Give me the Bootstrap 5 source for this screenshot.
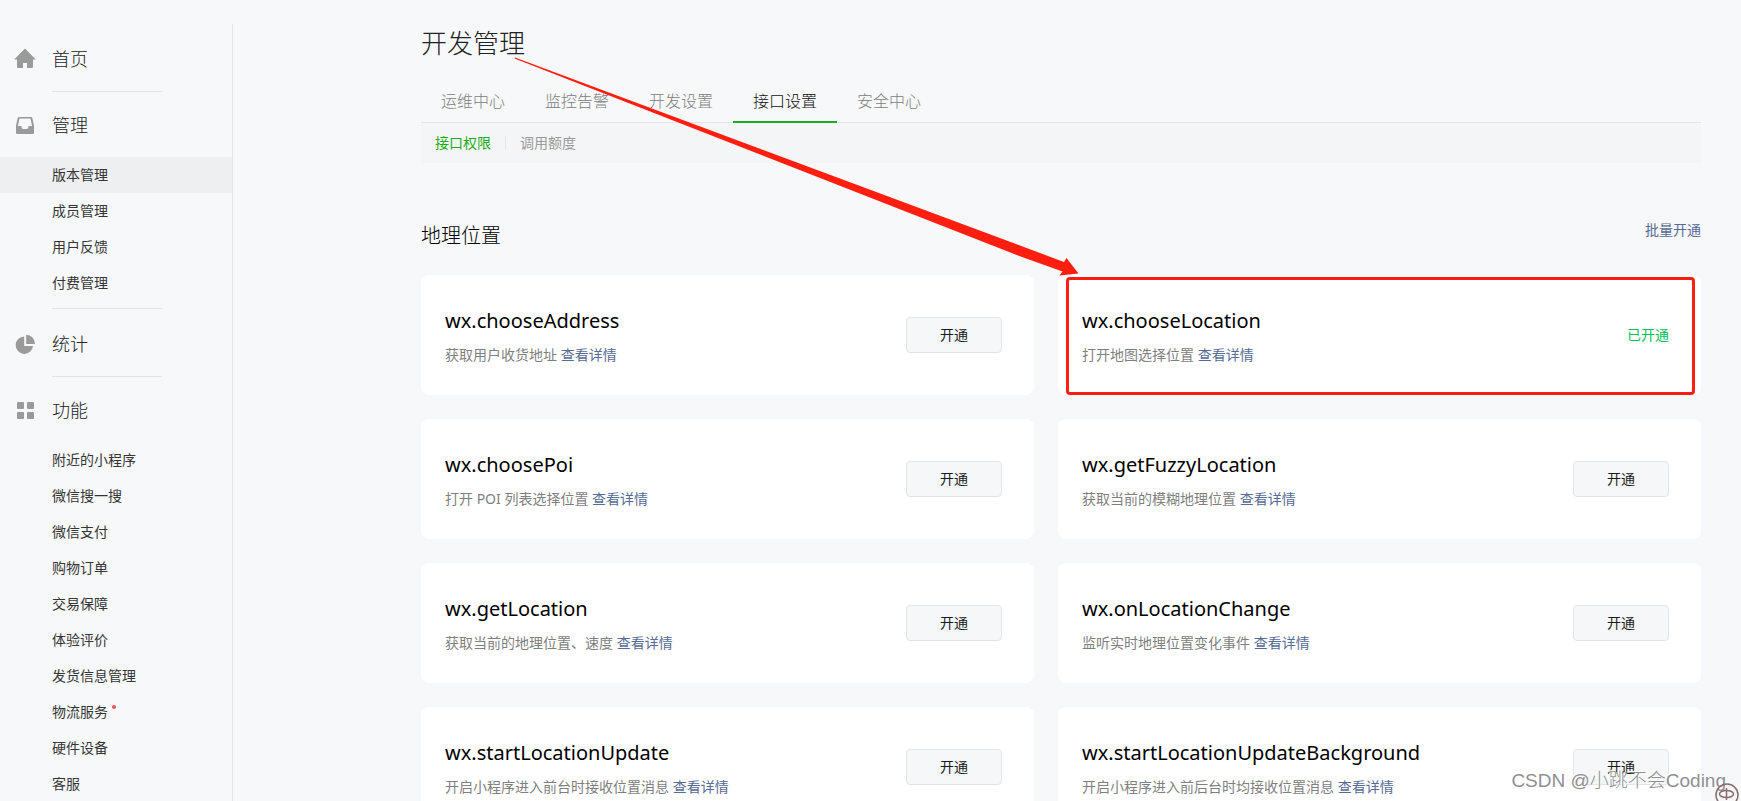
<!DOCTYPE html>
<html lang="zh-CN">
<head>
<meta charset="utf-8">
<meta name="viewport" content="width=device-width, initial-scale=1">
<title>开发管理</title>
<link href="https://cdn.jsdelivr.net/npm/bootstrap@5.3.0/dist/css/bootstrap.min.css" rel="stylesheet">
<style>
  body { background: #f7f8fa; color: #353535; font: 14px/20px "Noto Sans", "Noto Sans CJK SC", sans-serif; }
  a { text-decoration: none; }
  .page { height: 100vh; }

  /* sidebar */
  .side { width: 233px; margin-top: 24px; border-right: 1px solid #e4e5e7; }
  .side-head { height: 65px; padding-left: 14px; font-size: 18px; font-weight: 300; color: #222; gap: 16px; }
  .side-head svg { width: 22px; height: 22px; fill: #9a9a9a; }
  .side-group { padding-top: 2px; }
  .side-group.has-list { padding: 0 0 7px; }
  .side-line { width: 110px; height: 1px; margin-left: 52px; background: #e4e5e7; }
  .side-link { display: block; height: 36px; line-height: 36px; padding-left: 52px; color: #353535; }
  .side-link.active { background: #eeeff1; }
  .dot { width: 4px; height: 4px; margin: -12px 0 0 4px; background: #fa5151; vertical-align: middle; }

  /* content */
  .content { margin: 0 40px 0 188px; padding-top: 24px; }
  .page-title { font-size: 26px; line-height: 38px; font-weight: 300; color: #222; }
  .tabs { border-bottom: 1px solid #e4e5e7; margin-top: 18px; font-size: 16px; font-weight: 300; }
  .tabs a { padding: 0 20px; height: 43px; line-height: 43px; margin-bottom: -1px; color: #808080; border-bottom: 2px solid transparent; }
  .tabs a.active { color: #111; border-color: #1aad19; }
  .subtabs { height: 40px; padding-left: 14px; background: #f4f5f6; }
  .subtabs a { color: #9a9a9a; }
  .subtabs a.active { color: #1aad19; }
  .subtabs a + a { border-left: 1px solid #e4e5e7; margin-left: 14px; padding-left: 14px; line-height: 14px; }
  .section-head { margin-top: 57px; }
  .section-head h2 { font-size: 20px; line-height: 32px; font-weight: 300; color: #000; }
  .tip-link { color: #576b95; }

  .api-grid { display: grid; grid-template-columns: 613fr 643fr; gap: 24px; margin-top: 23px; }
  .api { height: 120px; padding: 0 32px 0 24px; background: #fff; border-radius: 8px; }
  .api h3 { font-size: 20px; line-height: 32px; font-weight: 400; color: #000; margin-bottom: 8px; }
  .api p { color: #7f7f7f; }
  .btn-open { width: 96px; height: 36px; padding: 0; font-size: 14px; line-height: 20px; color: #1a1b1c; background: #f6f7f9; border: 1px solid #e4e5e7; border-radius: 4px; }
  .opened { color: #07c160; }

  /* annotations */
  .frame { inset: 2px 6px 0 8px; border: 3px solid #ff1e10; border-radius: 4px; pointer-events: none; }
  .arrow { left: 93px; top: 57px; width: 566px; height: 220px; pointer-events: none; }
  .watermark { right: 15px; bottom: 6px; font: 300 19px/28px "Liberation Sans", "Noto Sans CJK SC", sans-serif; color: #8f9092; text-shadow: -1px -1px 0 #fff; }
  .stamp { right: 1px; bottom: -6px; width: 26px; height: 24px; }
</style>
</head>
<body>
<div class="page d-flex overflow-hidden position-relative">
  <nav class="side flex-shrink-0" aria-label="主导航">
    <div class="side-group">
      <a href="#" class="side-head d-flex align-items-center">
        <svg viewBox="0 0 22 22"><path d="M11 .5 21.300 11q.4.500-.3.500H19V19q0 1-1 1h-5v-5H9v5H4q-1 0-1-1v-7.500H.900q-.600 0-.300-.500z"/></svg>首页</a>
    </div>
    <div class="side-line"></div>
    <div class="side-group has-list">
      <a href="#" class="side-head d-flex align-items-center">
        <svg viewBox="0 0 22 22"><path fill-rule="evenodd" d="M5 3h12q1 0 1.300 1L20 11.500V19q0 1-1 1H3q-1 0-1-1v-7.500L3.700 4Q4 3 5 3zm.500 1.500L4 12h3.500v1q0 2 2 2h3q2 0 2-2v-1H18l-1.500-7.500z"/></svg>管理</a>
      <a href="#" class="side-link active">版本管理</a>
      <a href="#" class="side-link">成员管理</a>
      <a href="#" class="side-link">用户反馈</a>
      <a href="#" class="side-link">付费管理</a>
    </div>
    <div class="side-line"></div>
    <div class="side-group">
      <a href="#" class="side-head d-flex align-items-center">
        <svg viewBox="0 0 22 22"><path d="M10.200 3.500V13H19A8.700 8.700 0 1 1 10.200 3.500zM12.200 1.800A9 9 0 0 1 21 11h-8.800z"/></svg>统计</a>
    </div>
    <div class="side-line"></div>
    <div class="side-group has-list">
      <a href="#" class="side-head d-flex align-items-center">
        <svg viewBox="0 0 22 22"><rect x="3" y="3" width="7" height="7" rx="1"/><rect x="13" y="3" width="7" height="7" rx="1"/><rect x="3" y="13" width="7" height="7" rx="1"/><rect x="13" y="13" width="7" height="7" rx="1"/></svg>功能</a>
      <a href="#" class="side-link">附近的小程序</a>
      <a href="#" class="side-link">微信搜一搜</a>
      <a href="#" class="side-link">微信支付</a>
      <a href="#" class="side-link">购物订单</a>
      <a href="#" class="side-link">交易保障</a>
      <a href="#" class="side-link">体验评价</a>
      <a href="#" class="side-link">发货信息管理</a>
      <a href="#" class="side-link">物流服务<span class="dot d-inline-block rounded-circle"></span></a>
      <a href="#" class="side-link">硬件设备</a>
      <a href="#" class="side-link">客服</a>
    </div>
  </nav>

  <main class="content flex-grow-1 position-relative">
    <h1 class="page-title mb-0">开发管理</h1>
    <nav class="tabs d-flex" aria-label="开发管理">
      <a href="#">运维中心</a>
      <a href="#">监控告警</a>
      <a href="#">开发设置</a>
      <a href="#" class="active">接口设置</a>
      <a href="#">安全中心</a>
    </nav>
    <nav class="subtabs d-flex align-items-center" aria-label="接口设置">
      <a href="#" class="active">接口权限</a>
      <a href="#">调用额度</a>
    </nav>

    <div class="section-head d-flex justify-content-between align-items-start">
      <h2 class="mb-0">地理位置</h2>
      <a href="#" class="tip-link">批量开通</a>
    </div>

    <div class="api-grid">
      <section class="api d-flex align-items-center justify-content-between">
        <div><h3>wx.chooseAddress</h3><p class="mb-0">获取用户收货地址 <a href="#" class="tip-link">查看详情</a></p></div>
        <button type="button" class="btn btn-open">开通</button>
      </section>
      <section class="api d-flex align-items-center justify-content-between position-relative">
        <div><h3>wx.chooseLocation</h3><p class="mb-0">打开地图选择位置 <a href="#" class="tip-link">查看详情</a></p></div>
        <span class="opened">已开通</span>
        <div class="frame position-absolute"></div>
      </section>
      <section class="api d-flex align-items-center justify-content-between">
        <div><h3>wx.choosePoi</h3><p class="mb-0">打开 POI 列表选择位置 <a href="#" class="tip-link">查看详情</a></p></div>
        <button type="button" class="btn btn-open">开通</button>
      </section>
      <section class="api d-flex align-items-center justify-content-between">
        <div><h3>wx.getFuzzyLocation</h3><p class="mb-0">获取当前的模糊地理位置 <a href="#" class="tip-link">查看详情</a></p></div>
        <button type="button" class="btn btn-open">开通</button>
      </section>
      <section class="api d-flex align-items-center justify-content-between">
        <div><h3>wx.getLocation</h3><p class="mb-0">获取当前的地理位置、速度 <a href="#" class="tip-link">查看详情</a></p></div>
        <button type="button" class="btn btn-open">开通</button>
      </section>
      <section class="api d-flex align-items-center justify-content-between">
        <div><h3>wx.onLocationChange</h3><p class="mb-0">监听实时地理位置变化事件 <a href="#" class="tip-link">查看详情</a></p></div>
        <button type="button" class="btn btn-open">开通</button>
      </section>
      <section class="api d-flex align-items-center justify-content-between">
        <div><h3>wx.startLocationUpdate</h3><p class="mb-0">开启小程序进入前台时接收位置消息 <a href="#" class="tip-link">查看详情</a></p></div>
        <button type="button" class="btn btn-open">开通</button>
      </section>
      <section class="api d-flex align-items-center justify-content-between">
        <div><h3>wx.startLocationUpdateBackground</h3><p class="mb-0">开启小程序进入前后台时均接收位置消息 <a href="#" class="tip-link">查看详情</a></p></div>
        <button type="button" class="btn btn-open">开通</button>
      </section>
    </div>

    <svg class="arrow position-absolute" viewBox="0 0 566 220" fill="#ff1e10" aria-hidden="true"><path d="M1 .500 550 205 552.500 201 564.500 216.500 545.500 218.500 548.500 214.500 508 200 .500 1.500z"/></svg>
  </main>

  <div class="watermark position-absolute">CSDN @小跳不会Coding</div>
  <svg class="stamp position-absolute" viewBox="0 0 26 24" fill="none" stroke="#8a6a6c" stroke-width="1.500" aria-hidden="true"><circle cx="13" cy="12" r="11"/><ellipse cx="12.500" cy="11" rx="7" ry="3.500"/><path d="M12.500 5v12"/></svg>
</div>
<script src="https://cdn.jsdelivr.net/npm/bootstrap@5.3.0/dist/js/bootstrap.bundle.min.js"></script>
</body>
</html>
